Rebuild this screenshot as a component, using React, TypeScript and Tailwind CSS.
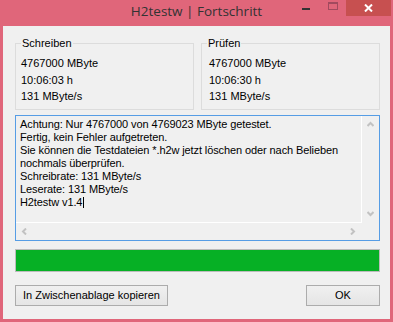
const writeLines = ['4767000 MByte', '10:06:03 h', '131 MByte/s'];
const verifyLines = ['4767000 MByte', '10:06:30 h', '131 MByte/s'];

const logLines = [
  'Achtung: Nur 4767000 von 4769023 MByte getestet.',
  'Fertig, kein Fehler aufgetreten.',
  'Sie können die Testdateien *.h2w jetzt löschen oder nach Belieben',
  'nochmals überprüfen.',
  'Schreibrate: 131 MByte/s',
  'Leserate: 131 MByte/s',
];

function TitleBar() {
  return (
    <div className="relative h-[26px] flex justify-center">
      <span className="mt-[2px] font-['Open_Sans',sans-serif] text-[13.5px] leading-[18px] text-[#333333]">
        H2testw | Fortschritt
      </span>
      {/* window buttons */}
      <div className="absolute top-0 right-[2px] flex items-start">
        <div className="w-[26px] h-[16px] flex justify-center pt-[8px]">
          <div className="w-[8px] h-[2px] bg-[#333333]" />
        </div>
        <div className="w-[27px] h-[16px] flex justify-center pt-[2px]">
          <div className="w-[10px] h-[8px] border border-t-2 border-[#a24a5e]" />
        </div>
        <div className="w-[45px] h-[16px] bg-[#c75050] flex items-center justify-center">
          <svg width="9" height="8" viewBox="0 0 9 8">
            <path d="M1 0.5 L8 7.5 M8 0.5 L1 7.5" stroke="#ffffff" strokeWidth="2" />
          </svg>
        </div>
      </div>
    </div>
  );
}

function Group({ title, lines, contentPad }: { title: string; lines: string[]; contentPad: string }) {
  return (
    <fieldset className="w-[179px] h-[73px] border border-[#dcdcdc] pl-[5px]">
      <legend className="px-[1px] leading-[13px]">{title}</legend>
      <div className={`pt-[5px] leading-[16.5px] ${contentPad}`}>
        {lines.map((l) => (
          <div key={l}>{l}</div>
        ))}
      </div>
    </fieldset>
  );
}

function Chevron({ dir }: { dir: 'up' | 'down' | 'left' | 'right' }) {
  const pts = {
    up: '0.5,5 3.5,2 6.5,5',
    down: '0.5,1 3.5,4 6.5,1',
    left: '5,0.5 2,3.5 5,6.5',
    right: '1,0.5 4,3.5 1,6.5',
  }[dir];
  return (
    <svg width="7" height="7" viewBox="0 0 7 7">
      <polyline points={pts} fill="none" stroke="#c2c2c2" strokeWidth="2" />
    </svg>
  );
}

function LogBox() {
  return (
    <div className="mt-[5px] h-[126px] border border-[#569de5] grid grid-cols-[1fr_17px] grid-rows-[1fr_17px]">
      <div className="border-r border-b border-white pl-[4px] pt-[2px] leading-[13px] tracking-[-0.1px] whitespace-nowrap overflow-hidden">
        {logLines.map((l) => (
          <div key={l}>{l}</div>
        ))}
        <div className="flex items-center">
          H2testw v1.4
          <span className="ml-[1px] w-[1px] h-[11px] bg-black" />
        </div>
      </div>
      <div className="flex flex-col justify-between">
        <div className="h-[17px] flex items-center justify-center">
          <Chevron dir="up" />
        </div>
        <div className="h-[17px] flex items-center justify-center">
          <Chevron dir="down" />
        </div>
      </div>
      <div className="flex justify-between">
        <div className="w-[17px] flex items-center justify-center">
          <Chevron dir="left" />
        </div>
        <div className="w-[17px] flex items-center justify-center">
          <Chevron dir="right" />
        </div>
      </div>
      <div />
    </div>
  );
}

function Button({ label, width }: { label: string; width: string }) {
  return (
    <button
      className={`${width} h-[21px] border border-[#acacac] bg-gradient-to-b from-[#f0f0f0] to-[#e5e5e5] text-[11px] leading-[19px] text-black`}
    >
      {label}
    </button>
  );
}

export default function App() {
  return (
    <div className="w-[393px] h-[322px] bg-[#e0667a] flex flex-col font-['Liberation_Sans',Arial,sans-serif] text-[11px] text-black">
      <TitleBar />
      <div className="mx-[3px] mb-[3px] flex-1 bg-[#f0f0f0] pl-[12px] pr-[10px] pt-[11px] flex flex-col">
        <div className="flex gap-[7px]">
          <Group title="Schreiben" lines={writeLines} contentPad="" />
          <Group title="Prüfen" lines={verifyLines} contentPad="pl-[2px]" />
        </div>
        <LogBox />
        <div className="mt-[8px] h-[23px] border border-[#bcbcbc] bg-[#e6e6e6]">
          <div className="h-full w-full bg-[#06b025]" />
        </div>
        <div className="mt-[13px] flex justify-between">
          <Button label="In Zwischenablage kopieren" width="w-[153px]" />
          <Button label="OK" width="w-[74px]" />
        </div>
      </div>
    </div>
  );
}
